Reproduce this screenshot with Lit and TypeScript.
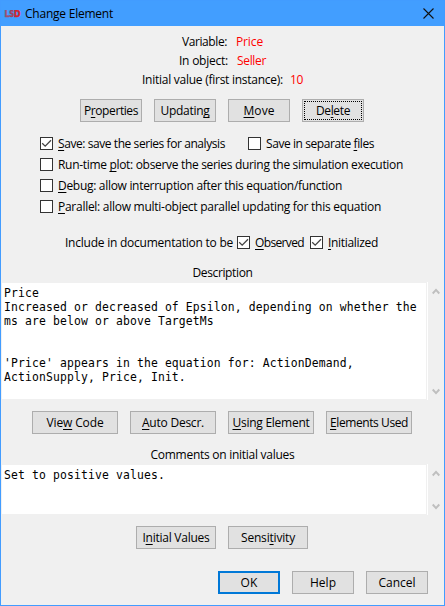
import { LitElement, html, css, svg, nothing } from "lit";
import { customElement, property } from "lit/decorators.js";

/* Text with an optional "_" before its access key, tracked to fill a given width. */
@customElement("ui-label")
class UiLabel extends LitElement {
  @property() text = "";
  @property({ type: Number }) w = 0;
  static styles = css`
    :host { display: inline-block; white-space: pre; line-height: 16px; flex: none; }
    u { text-decoration: underline; text-decoration-thickness: 1px; text-underline-offset: 2px; text-decoration-skip-ink: none; }
  `;
  updated() {
    const span = this.renderRoot.querySelector("span") as HTMLElement;
    span.style.letterSpacing = "0px";
    const natural = span.getBoundingClientRect().width;
    const n = this.text.replace("_", "").length;
    span.style.letterSpacing = ((this.w - natural) / n).toFixed(3) + "px";
    this.style.width = this.w + "px";
  }
  render() {
    const i = this.text.indexOf("_");
    return i < 0
      ? html`<span>${this.text}</span>`
      : html`<span>${this.text.slice(0, i)}<u>${this.text[i + 1]}</u>${this.text.slice(i + 2)}</span>`;
  }
}

@customElement("ui-check")
class UiCheck extends LitElement {
  @property() text = "";
  @property({ type: Number }) w = 0;
  @property({ type: Boolean }) checked = false;
  static styles = css`
    :host { display: flex; align-items: center; height: 17px; gap: 5px; }
    .box { box-sizing: border-box; width: 13px; height: 13px; border: 1px solid #333; background: #fff; flex: none; }
    svg { display: block; width: 11px; height: 11px; }
    path { fill: none; stroke: #444; stroke-width: 1.3; }
  `;
  render() {
    return html`<div class="box">${this.checked
        ? html`<svg viewBox="0 0 11 11"><path d="M1.2 5.2 L4.2 8.2 L10 2.3" /></svg>`
        : nothing}</div><ui-label text=${this.text} w=${this.w}></ui-label>`;
  }
}

@customElement("ui-memo")
class UiMemo extends LitElement {
  @property() text = "";
  static styles = css`
    :host { display: flex; margin: 0 0 0 1px; }
    .text { box-sizing: border-box; width: 424px; background: #fff; padding: 3px 0 0 2px; white-space: pre;
      font: 11.4px/14px "DejaVu Sans Mono", monospace; letter-spacing: 0.137px; }
    .edge { width: 1px; margin: -1px 4px -1px 1px; background: #fff; }
    .bar { display: flex; flex-direction: column; justify-content: space-between; padding: 5px 0 4px; }
    svg { display: block; width: 8px; height: 7px; }
    path { fill: none; stroke: #bfbfbf; stroke-width: 2; }
  `;
  render() {
    const arrow = (d: string) => html`<svg viewBox="0 0 8 7">${svg`<path d=${d} />`}</svg>`;
    return html`<div class="text">${this.text}</div><div class="edge"></div>
      <div class="bar">${arrow("M0.7 5.5 L4 1.9 L7.3 5.5")}${arrow("M0.7 1.5 L4 5.1 L7.3 1.5")}</div>`;
  }
}

type Btn = [string, number, string?];

@customElement("app-root")
class AppRoot extends LitElement {
  static styles = css`
    :host { display: block; font: 12px/16px "Open Sans", "Noto Sans", sans-serif; color: #000; }
    .window { box-sizing: border-box; width: 445px; height: 606px; border: 1px solid #429cff; background: #f0f0f0;
      display: flex; flex-direction: column; overflow: hidden; }
    .title { height: 25px; flex: none; background: #429eff; display: flex; align-items: center; padding: 0 10px 0 3px; }
    .logo { width: 17px; height: 8px; margin-right: 4px; }
    .logo text { font: bold 8px "DejaVu Sans", sans-serif; stroke-width: 0.4; }
    .close { width: 11px; height: 11px; margin-left: auto; }
    .close path { stroke: #111; stroke-width: 1.1; fill: none; }
    .fields { padding-top: 6px; flex: none; }
    .field { display: flex; height: 19px; align-items: center; gap: 9px; }
    .f0 { padding-left: 181px; } .f1 { padding-left: 178px; } .f2 { padding-left: 141px; gap: 7px; }
    .red { color: #ff0000; }
    .buttons { display: flex; gap: 12px; flex: none; }
    .b { box-sizing: border-box; height: 23px; border: 1px solid #adadad; background: #e1e1e1;
      display: flex; align-items: center; justify-content: center; }
    .w62 .b { width: 62px; } .w86 .b { width: 86px; } .w80 .b { width: 80px; }
    .b.default { border: 2px solid #0078d7; }
    .b.focus { outline: 1px dotted #000; outline-offset: -3px; }
    .main { margin: 10px 0 0 79px; }
    .checks { margin: 13px 0 0 39px; flex: none; display: flex; flex-direction: column; gap: 4px; }
    .pair { display: flex; gap: 23px; }
    .doc { display: flex; align-items: center; margin: 19px 0 0 64px; height: 17px; gap: 4px; flex: none; }
    .doc .init { margin-left: 2px; }
    .heading { text-align: center; height: 16px; flex: none; }
    .h1 { margin-top: 14px; } .h2 { margin-top: 13px; }
    .description { height: 116px; margin-top: 2px; flex: none; }
    .comments { height: 49px; margin-top: 2px; flex: none; }
    .code { margin: 12px 0 0 31px; }
    .values { margin: 12px 0 0 135px; }
    .final { margin: 22px 0 0 217px; }
  `;
  private row(cls: string, items: Btn[]) {
    return html`<div class="buttons ${cls}">${items.map(
      ([t, w, kind]) => html`<div class="b ${kind ?? ""}"><ui-label text=${t} w=${w}></ui-label></div>`)}</div>`;
  }
  render() {
    const fields: [string, number, string, number][] = [
      ["Variable:", 45, "Price", 27],
      ["In object:", 49, "Seller", 29],
      ["Initial value (first instance):", 141, "10", 13],
    ];
    return html`<div class="window">
      <div class="title">
        <svg class="logo" viewBox="0 0 17 8">
          <text x="0.4" y="7" fill="#a04f70" stroke="#a04f70" textLength="5" lengthAdjust="spacingAndGlyphs">L</text>
          <text x="5.2" y="7" fill="#a83e5c" stroke="#a83e5c" textLength="5" lengthAdjust="spacingAndGlyphs">S</text>
          <text x="10" y="7" fill="#d82228" stroke="#d82228" textLength="6.5" lengthAdjust="spacingAndGlyphs">D</text>
        </svg>
        <ui-label text="Change Element" w="88"></ui-label>
        <svg class="close" viewBox="0 0 11 11"><path d="M0.5 0.5 L10.5 10.5 M10.5 0.5 L0.5 10.5" /></svg>
      </div>
      <div class="fields">${fields.map(([a, aw, b, bw], i) => html`<div class="field f${i}">
        <ui-label text=${a} w=${aw}></ui-label><ui-label class="red" text=${b} w=${bw}></ui-label></div>`)}
      </div>
      ${this.row("main w62", [["P_roperties", 54], ["Updatin_g", 49], ["_Move", 31], ["De_lete", 34, "focus"]])}
      <div class="checks">
        <div class="pair">
          <ui-check checked text="_Save: save the series for analysis" w="167"></ui-check>
          <ui-check text="Save in separate _files" w="108"></ui-check>
        </div>
        <ui-check text="Run-time _plot: observe the series during the simulation execution" w="345"></ui-check>
        <ui-check text="_Debug: allow interruption after this equation/function" w="284"></ui-check>
        <ui-check text="_Parallel: allow multi-object parallel updating for this equation" w="323"></ui-check>
      </div>
      <div class="doc">
        <ui-label text="Include in documentation to be" w="168"></ui-label>
        <ui-check checked text="_Observed" w="49"></ui-check>
        <ui-check class="init" checked text="_Initialized" w="50"></ui-check>
      </div>
      <div class="heading h1"><ui-label text="Description" w="60"></ui-label></div>
      <ui-memo class="description" .text=${"Price\nIncreased or decreased of Epsilon, depending on whether the\nms are below or above TargetMs\n\n\n'Price' appears in the equation for: ActionDemand,\nActionSupply, Price, Init."}></ui-memo>
      ${this.row("code w86", [["Vie_w Code", 57], ["_Auto Descr.", 62], ["_Using Element", 77], ["_Elements Used", 78]])}
      <div class="heading h2"><ui-label text="Comments on initial values" w="144"></ui-label></div>
      <ui-memo class="comments" .text=${"Set to positive values."}></ui-memo>
      ${this.row("values w80", [["I_nitial Values", 67], ["Sensi_tivity", 54]])}
      ${this.row("final w62", [["OK", 17, "default"], ["Help", 26], ["Cancel", 37]])}
    </div>`;
  }
}
